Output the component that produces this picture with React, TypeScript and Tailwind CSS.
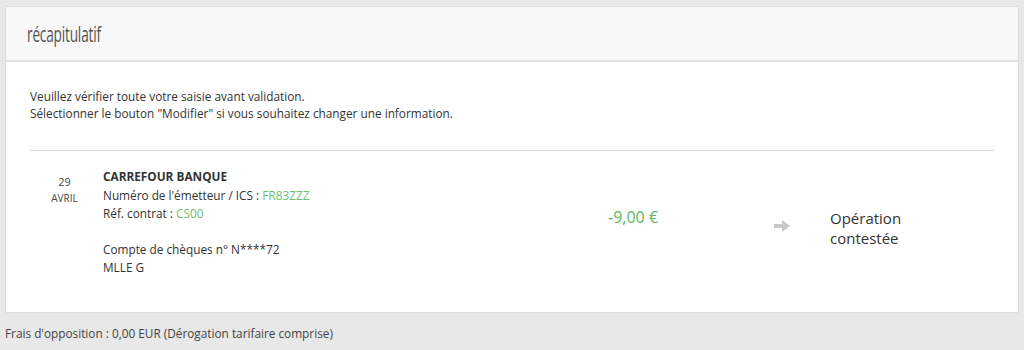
import React from 'react';

const body = { fontFamily: '"Open Sans", "DejaVu Sans", sans-serif' };

const App: React.FC = () => {
  return (
    <div className="w-[1024px] h-[350px] bg-[#e8e8e8] pt-[6px] px-[5px] overflow-hidden" style={body}>
      <div className="bg-white border border-[#dedede]">
        <div className="h-[55px] bg-[#f8f8f8] border-b-2 border-[#e2e2e2] flex items-center px-[21px]">
          <h2 className="inline-block origin-left scale-x-[0.62] text-[22px] text-[#555] font-normal tracking-[-0.3px]">
            récapitulatif
          </h2>
        </div>

        <div className="px-[24px] pt-[26px] pb-[35px]">
          <div className="text-[11.8px] leading-[17px] text-[#333]">
            <p>Veuillez vérifier toute votre saisie avant validation.</p>
            <p>Sélectionner le bouton "Modifier" si vous souhaitez changer une information.</p>
          </div>

          <div className="mt-[28px] border-t border-[#d9d9d9]" />

          <div className="flex pt-[16px]">
            <div className="w-[69px] flex flex-col items-center pt-[7px] text-[#444]">
              <span className="text-[11px] leading-[15px]">29</span>
              <span className="text-[10px] leading-[18px]">AVRIL</span>
            </div>

            <div className="w-[509px] pl-[4px] text-[11.8px] leading-[18.5px] text-[#333]">
              <p className="font-bold">CARREFOUR BANQUE</p>
              <p>
                Numéro de l'émetteur / ICS : <span className="text-[#6cc070]">FR83ZZZ</span>
              </p>
              <p>
                Réf. contrat : <span className="text-[#6cc070]">CS00</span>
              </p>
              <p className="mt-[17px]">Compte de chèques n° N****72</p>
              <p>MLLE G</p>
            </div>

            <div className="w-[162px] pt-[38px] text-[16px] leading-[24px] text-[#5cb85c]">-9,00 €</div>

            <div className="w-[60px] pt-[53px]">
              <svg width="16" height="12" viewBox="0 0 16 12" className="ml-[4px]">
                <path d="M0 4h8V0l8 6-8 6V8H0z" fill="#c8c8c8" />
              </svg>
            </div>

            <div className="pt-[41px] text-[15px] leading-[20px] text-[#333]">
              <p>Opération</p>
              <p>contestée</p>
            </div>
          </div>
        </div>
      </div>

      <p className="mt-[12px] text-[11.8px] text-[#444]">
        Frais d'opposition : 0,00 EUR (Dérogation tarifaire comprise)
      </p>
    </div>
  );
};

export default App;
